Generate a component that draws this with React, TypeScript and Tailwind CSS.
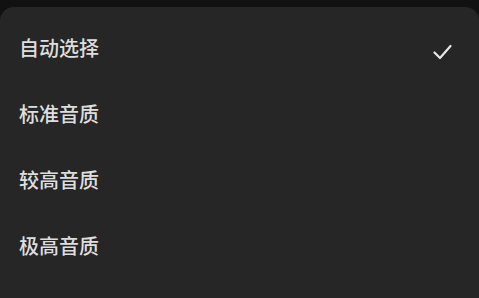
const options = ['自动选择', '标准音质', '较高音质', '极高音质'];

export default function App() {
  const selected = 0;

  return (
    <div
      className="h-[298px] w-full overflow-hidden bg-[#111111] pt-[7px]"
      style={{ fontFamily: '"Noto Sans CJK SC", "Noto Sans", sans-serif' }}
    >
      <div className="h-full rounded-t-[14px] bg-[#262626] pt-[8px]">
        {options.map((label, i) => (
          <div key={label} className="flex h-[66px] items-center justify-between pl-[19px] pr-[27px]">
            <span className="text-[20px] font-medium leading-none text-[#dedede]">{label}</span>
            {i === selected && (
              <svg width="19" height="16" viewBox="0 0 19 16" fill="none" className="mt-[7px]">
                <polyline
                  points="1.5,8.5 7,14 17.5,2"
                  stroke="#e6e6e6"
                  strokeWidth="2.2"
                  strokeLinecap="round"
                  strokeLinejoin="round"
                />
              </svg>
            )}
          </div>
        ))}
      </div>
    </div>
  );
}
